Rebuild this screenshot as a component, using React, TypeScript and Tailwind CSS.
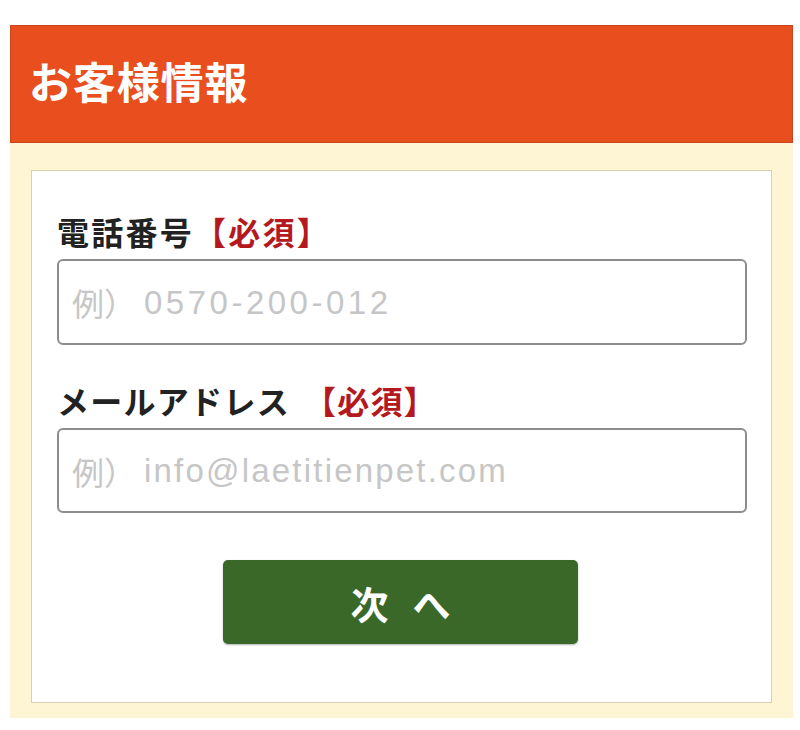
import React from "react";

const font = { fontFamily: '"Noto Sans CJK JP", "Noto Sans", sans-serif' };
const latin = { fontFamily: '"Liberation Sans", "Noto Sans CJK JP", sans-serif' };

export default function App() {
  return (
    <div className="w-[800px] h-[730px] bg-white pt-[25px] pl-[10px]" style={font}>
      <div className="w-[783px]">
        <div className="h-[118px] bg-[#e84e1e] border border-[#c9451c] flex items-center pl-[18px]">
          <h1 className="text-[43px] font-bold text-white leading-none -mt-[7px] tracking-[0.02em]">お客様情報</h1>
        </div>
        <div className="bg-[#fdf5d3] px-[21px] pt-[27px] pb-[15px]">
          <div className="h-[533px] bg-white border border-[#d8d0b0] px-[25px] pt-[44px]">
            <div className="text-[32px] font-bold text-[#222] leading-none tracking-[0.07em]">
              電話番号<span className="text-[#b3191e]">【必須】</span>
            </div>
            <div className="mt-[12px] h-[86px] w-[690px] rounded-[6px] border-2 border-[#8d8d8d] flex items-center pl-[13px]">
              <span className="text-[32px] text-[#c6c6c6] leading-none">例）</span>
              <span className="text-[33px] text-[#c6c6c6] leading-none tracking-[3.5px] ml-[8px]" style={latin}>0570-200-012</span>
            </div>
            <div className="mt-[39px] text-[32px] font-bold text-[#222] leading-none tracking-[0.04em]">
              メールアドレス<span className="text-[#b3191e] ml-[14px]">【必須】</span>
            </div>
            <div className="mt-[12px] h-[85px] w-[690px] rounded-[6px] border-2 border-[#8d8d8d] flex items-center pl-[13px]">
              <span className="text-[32px] text-[#c6c6c6] leading-none">例）</span>
              <span className="text-[33px] text-[#c6c6c6] leading-none tracking-[2.2px] ml-[8px]" style={latin}>info@laetitienpet.com</span>
            </div>
            <div className="mt-[47px] flex pl-[166px]">
              <button className="w-[355px] h-[84px] rounded-[5px] bg-[#3a6829] text-white text-[38px] font-bold flex items-center justify-center shadow-[0_1px_2px_rgba(0,0,0,0.3)]">
                <span className="tracking-[0.2em] -mr-[0.2em]">次 へ</span>
              </button>
            </div>
          </div>
        </div>
      </div>
    </div>
  );
}
